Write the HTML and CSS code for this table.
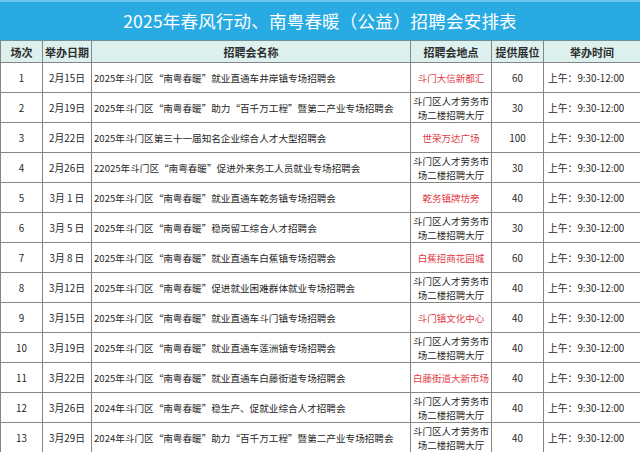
FILE: index.html
```html
<!DOCTYPE html>
<html lang="zh-CN">
<head>
<meta charset="utf-8">
<link rel="stylesheet" href="styles.css">
</head>
<body>
<div class="sheet">
  <div class="title">2025年春风行动、南粤春暖（公益）招聘会安排表</div>
  <table class="grid">
    <colgroup>
      <col class="c1"><col class="c2"><col class="c3"><col class="c4"><col class="c5"><col class="c6">
    </colgroup>
    <thead>
      <tr><th>场次</th><th>举办日期</th><th>招聘会名称</th><th>招聘会地点</th><th>提供展位</th><th>举办时间</th></tr>
    </thead>
    <tbody>
      <tr><td class="ctr">1</td><td class="ctr">2月15日</td><td class="name">2025年斗门区“南粤春暖”就业直通车井岸镇专场招聘会</td><td class="ctr red">斗门大信新都汇</td><td class="ctr">60</td><td class="time">上午：9:30-12:00</td></tr>
      <tr><td class="ctr">2</td><td class="ctr">2月19日</td><td class="name">2025年斗门区“南粤春暖”助力“百千万工程”暨第二产业专场招聘会</td><td class="ctr loc">斗门区人才劳务市场二楼招聘大厅</td><td class="ctr">30</td><td class="time">上午：9:30-12:00</td></tr>
      <tr><td class="ctr">3</td><td class="ctr">2月22日</td><td class="name">2025年斗门区第三十一届知名企业综合人才大型招聘会</td><td class="ctr red">世荣万达广场</td><td class="ctr">100</td><td class="time">上午：9:30-12:00</td></tr>
      <tr><td class="ctr">4</td><td class="ctr">2月26日</td><td class="name">22025年斗门区“南粤春暖”促进外来务工人员就业专场招聘会</td><td class="ctr loc">斗门区人才劳务市场二楼招聘大厅</td><td class="ctr">30</td><td class="time">上午：9:30-12:00</td></tr>
      <tr><td class="ctr">5</td><td class="ctr">3月 1 日</td><td class="name">2025年斗门区“南粤春暖”就业直通车乾务镇专场招聘会</td><td class="ctr red">乾务镇牌坊旁</td><td class="ctr">40</td><td class="time">上午：9:30-12:00</td></tr>
      <tr><td class="ctr">6</td><td class="ctr">3月 5 日</td><td class="name">2025年斗门区“南粤春暖”稳岗留工综合人才招聘会</td><td class="ctr loc">斗门区人才劳务市场二楼招聘大厅</td><td class="ctr">30</td><td class="time">上午：9:30-12:00</td></tr>
      <tr><td class="ctr">7</td><td class="ctr">3月 8 日</td><td class="name">2025年斗门区“南粤春暖”就业直通车白蕉镇专场招聘会</td><td class="ctr red">白蕉招商花园城</td><td class="ctr">60</td><td class="time">上午：9:30-12:00</td></tr>
      <tr><td class="ctr">8</td><td class="ctr">3月12日</td><td class="name">2025年斗门区“南粤春暖”促进就业困难群体就业专场招聘会</td><td class="ctr loc">斗门区人才劳务市场二楼招聘大厅</td><td class="ctr">40</td><td class="time">上午：9:30-12:00</td></tr>
      <tr><td class="ctr">9</td><td class="ctr">3月15日</td><td class="name">2025年斗门区“南粤春暖”就业直通车斗门镇专场招聘会</td><td class="ctr red">斗门镇文化中心</td><td class="ctr">40</td><td class="time">上午：9:30-12:00</td></tr>
      <tr><td class="ctr">10</td><td class="ctr">3月19日</td><td class="name">2025年斗门区“南粤春暖”就业直通车莲洲镇专场招聘会</td><td class="ctr loc">斗门区人才劳务市场二楼招聘大厅</td><td class="ctr">40</td><td class="time">上午：9:30-12:00</td></tr>
      <tr><td class="ctr">11</td><td class="ctr">3月22日</td><td class="name">2025年斗门区“南粤春暖”就业直通车白藤街道专场招聘会</td><td class="ctr red">白藤街道大新市场</td><td class="ctr">40</td><td class="time">上午：9:30-12:00</td></tr>
      <tr><td class="ctr">12</td><td class="ctr">3月26日</td><td class="name">2024年斗门区“南粤春暖”稳生产、促就业综合人才招聘会</td><td class="ctr loc">斗门区人才劳务市场二楼招聘大厅</td><td class="ctr">40</td><td class="time">上午：9:30-12:00</td></tr>
      <tr><td class="ctr">13</td><td class="ctr">3月29日</td><td class="name">2024年斗门区“南粤春暖”助力“百千万工程”暨第二产业专场招聘会</td><td class="ctr loc">斗门区人才劳务市场二楼招聘大厅</td><td class="ctr">40</td><td class="time">上午：9:30-12:00</td></tr>
    </tbody>
  </table>
</div>
</body>
</html>
```

FILE: styles.css
```css
html, body {
  margin: 0;
  padding: 0;
  background: #ffffff;
}

.sheet {
  width: 640px;
  height: 452px;
  overflow: hidden;
  font-family: "Noto Sans CJK SC", "Noto Sans", sans-serif;
  color: #262626;
}

.title {
  height: 40px;
  box-sizing: border-box;
  border-top: 2px solid #6cc7ef;
  background: #28abe3;
  color: #ffffff;
  font-size: 17.5px;
  line-height: 38px;
  text-align: center;
  letter-spacing: 0.2px;
}

.grid {
  width: 640px;
  border-collapse: collapse;
  table-layout: fixed;
}

.c1 { width: 42px; }
.c2 { width: 49px; }
.c3 { width: 319px; }
.c4 { width: 81px; }
.c5 { width: 52px; }
.c6 { width: 97px; }

.grid th,
.grid td {
  border: 1px solid #858585;
  padding: 0;
  vertical-align: middle;
  overflow: hidden;
  white-space: nowrap;
  line-height: 14px;
}

.grid thead tr {
  height: 22px;
}

.grid th {
  background: #dcf1ee;
  font-size: 11px;
  font-weight: 700;
  color: #2e2e2e;
  text-align: center;
  border-top-color: #6e8f96;
}

.grid tbody tr {
  height: 30px;
}

.grid td {
  font-size: 9.8px;
  color: #262626;
}

.ctr {
  text-align: center;
}

.name {
  padding-left: 2px !important;
  text-align: left;
  font-size: 9.6px !important;
}

.time {
  padding-left: 4px !important;
  text-align: left;
  font-size: 9.8px !important;
}

.red {
  color: #e23b46 !important;
  font-size: 9.5px !important;
}

.loc {
  white-space: normal !important;
  line-height: 14px !important;
  font-size: 9.5px !important;
  padding: 0 1px !important;
}
```
